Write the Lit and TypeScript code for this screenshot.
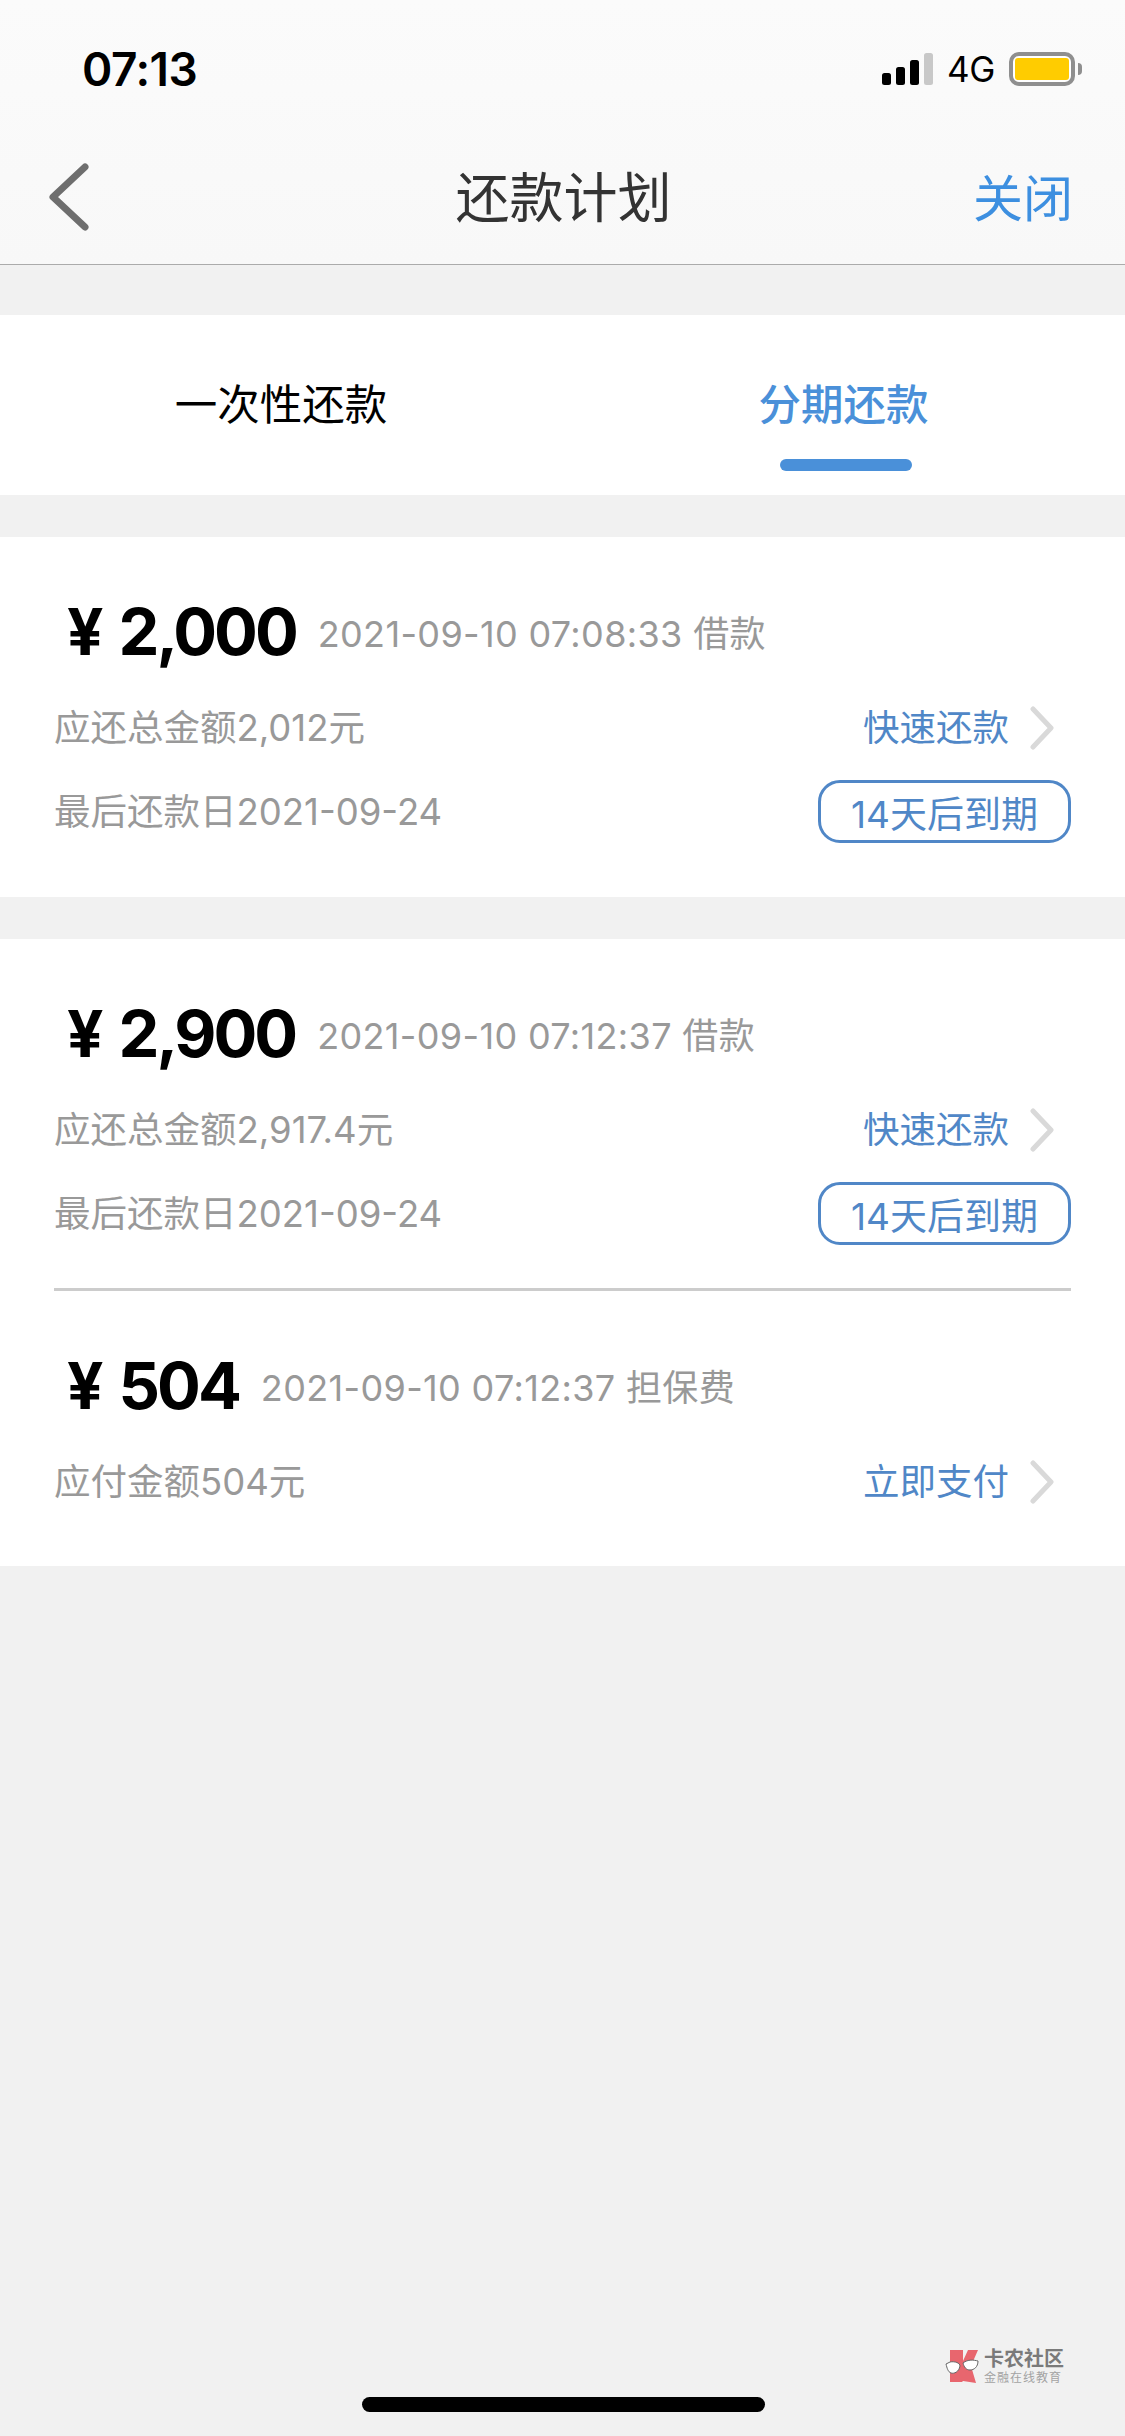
import { LitElement, html, css, nothing } from 'lit';
import { customElement, state } from 'lit/decorators.js';

interface Entry {
  amount: string;
  time: string;
  kind: string;
  owed: string;
  action: string;
  due?: string;
}

// one card can hold several entries, split by a rule
const cards: Entry[][] = [
  [
    {
      amount: '2,000',
      time: '2021-09-10 07:08:33',
      kind: '借款',
      owed: '应还总金额2,012元',
      action: '快速还款',
      due: '2021-09-24',
    },
  ],
  [
    {
      amount: '2,900',
      time: '2021-09-10 07:12:37',
      kind: '借款',
      owed: '应还总金额2,917.4元',
      action: '快速还款',
      due: '2021-09-24',
    },
    {
      amount: '504',
      time: '2021-09-10 07:12:37',
      kind: '担保费',
      owed: '应付金额504元',
      action: '立即支付',
    },
  ],
];

@customElement('app-root')
export class AppRoot extends LitElement {
  @state()
  activeTab = 1;

  static styles = css`
    :host {
      display: block;
      position: relative;
      height: 2436px;
      overflow: hidden;
      background: #f1f1f1;
      font-family: Inter, 'Noto Sans CJK SC', sans-serif;
      color: #000;
    }

    .top {
      background: linear-gradient(#fbfbfb, #f8f8f8);
      border-bottom: 1px solid #ababab;
    }

    .status {
      height: 138px;
      box-sizing: border-box;
      padding: 0 43px 0 82px;
      display: flex;
      align-items: center;
      justify-content: space-between;
    }

    .clock {
      font-size: 46px;
      font-weight: 600;
      letter-spacing: -0.5px;
    }

    .status-right {
      display: flex;
      align-items: center;
    }

    .bars {
      display: flex;
      align-items: flex-end;
      gap: 5.5px;
      height: 32px;
    }

    .bars span {
      width: 8.5px;
      background: #000;
      border-radius: 2.5px;
    }

    .bars .off {
      background: #c8c8c8;
    }

    .network {
      font-size: 35px;
      margin: 0 14px 0 14px;
      letter-spacing: -0.3px;
    }

    .battery {
      width: 66px;
      height: 34px;
      box-sizing: border-box;
      border: 4px solid #8f8f8f;
      border-radius: 10px;
      padding: 2px;
      background: #fff;
    }

    .battery i {
      display: block;
      height: 100%;
      background: #ffcc00;
      border-radius: 3px;
    }

    .nub {
      width: 4px;
      height: 12px;
      margin-left: 3px;
      background: #8f8f8f;
      border-radius: 0 4px 4px 0;
    }

    .nav {
      height: 126px;
      box-sizing: border-box;
      padding: 0 52px 8px 44px;
      display: grid;
      grid-template-columns: 1fr auto 1fr;
      align-items: center;
    }

    .back {
      display: block;
      width: 48px;
      height: 72px;
    }

    .title {
      font-size: 54px;
      line-height: 70px;
      padding-top: 3px;
      margin-left: 10px;
      color: #333;
    }

    .close {
      justify-self: end;
      font-size: 50px;
      line-height: 70px;
      padding-top: 3px;
      color: #3d8fe0;
    }

    .tabs {
      margin-top: 50px;
      height: 180px;
      background: #fff;
      display: grid;
      grid-template-columns: 562px 1fr;
    }

    .tab {
      position: relative;
      display: flex;
      justify-content: center;
      padding-top: 60px;
      font-size: 42.5px;
      line-height: 60px;
    }

    .tab.on {
      color: #4a90d9;
      font-weight: 500;
    }

    .tab.on::after {
      content: '';
      position: absolute;
      top: 144px;
      left: 218px;
      width: 132px;
      height: 12px;
      border-radius: 6px;
      background: #4a90d9;
    }

    .card {
      margin-top: 42px;
      background: #fff;
      padding: 0 54px 54px;
      display: flex;
      flex-direction: column;
    }

    .entry {
      padding-top: 59px;
    }

    .rule {
      margin-top: 43px;
      height: 3px;
      background: #cccccc;
    }

    .head {
      height: 70px;
      display: flex;
      align-items: center;
      padding-left: 13px;
    }

    .yen {
      font-size: 64px;
      font-weight: 700;
      margin-right: 15px;
    }

    .amount {
      font-size: 65px;
      font-weight: 700;
      letter-spacing: -3px;
    }

    .time {
      margin-left: 22px;
      font-size: 36px;
      letter-spacing: 0.35px;
      color: #999;
      white-space: pre;
    }

    .line {
      margin-top: 32px;
      height: 60px;
      display: flex;
      align-items: center;
      justify-content: space-between;
      font-size: 36.5px;
      color: #999;
    }

    .line.last {
      margin-top: 22px;
      height: 63px;
    }

    .text {
      padding-bottom: 6px;
    }

    .last .text {
      padding-bottom: 4px;
    }

    .link {
      display: flex;
      align-items: center;
      color: #5087c7;
      font-size: 36.5px;
    }

    .chevron {
      display: block;
      width: 24px;
      height: 44px;
      margin: 0 17px 0 21px;
    }

    .badge {
      width: 253px;
      height: 63px;
      box-sizing: border-box;
      border: 3px solid #5087c7;
      border-radius: 22px;
      display: flex;
      align-items: center;
      justify-content: center;
      color: #5087c7;
      font-size: 37px;
    }

    .watermark {
      position: absolute;
      left: 945px;
      top: 2348px;
      display: flex;
      align-items: center;
      gap: 3px;
    }

    .mark {
      display: block;
      width: 36px;
      height: 37px;
    }

    .brand {
      display: flex;
      flex-direction: column;
      color: #7a7a7a;
    }

    .brand b {
      font-size: 20px;
      line-height: 23px;
      font-weight: 700;
    }

    .brand small {
      font-size: 12px;
      line-height: 14px;
      letter-spacing: 1px;
      color: #a3a3a3;
      white-space: nowrap;
    }

    .home {
      position: absolute;
      left: 362px;
      top: 2397px;
      width: 403px;
      height: 15px;
      border-radius: 8px;
      background: #000;
    }
  `;

  renderEntry(e: Entry, i: number) {
    return html`
      ${i > 0 ? html`<div class="rule"></div>` : nothing}
      <div class="entry">
        <div class="head">
          <span class="yen">¥</span>
          <span class="amount">${e.amount}</span>
          <span class="time">${e.time} ${e.kind}</span>
        </div>
        <div class="line">
          <span class="text">${e.owed}</span>
          <span class="link">
            <span class="text">${e.action}</span>
            <svg class="chevron" viewBox="0 0 24 44" fill="none" stroke="#d9d9d9" stroke-width="5" stroke-linecap="round" stroke-linejoin="round">
              <path d="M3 3 L21 22 L3 41" />
            </svg>
          </span>
        </div>
        ${e.due
          ? html`<div class="line last">
              <span class="text">最后还款日${e.due}</span>
              <span class="badge">14天后到期</span>
            </div>`
          : nothing}
      </div>
    `;
  }

  render() {
    return html`
      <div class="top">
        <div class="status">
          <span class="clock">07:13</span>
          <div class="status-right">
            <div class="bars">
              <span style="height:12px"></span>
              <span style="height:18px"></span>
              <span style="height:25px"></span>
              <span class="off" style="height:32px"></span>
            </div>
            <span class="network">4G</span>
            <div class="battery"><i></i></div>
            <div class="nub"></div>
          </div>
        </div>
        <div class="nav">
          <svg class="back" viewBox="0 0 48 72" fill="none" stroke="#6e6e6e" stroke-width="7" stroke-linecap="round" stroke-linejoin="round">
            <path d="M41 6 L9 36 L41 66" />
          </svg>
          <span class="title">还款计划</span>
          <span class="close">关闭</span>
        </div>
      </div>

      <div class="tabs">
        ${['一次性还款', '分期还款'].map(
          (t, i) => html`<div class="tab ${i === this.activeTab ? 'on' : ''}">${t}</div>`
        )}
      </div>

      ${cards.map(
        (entries) => html`<div class="card">${entries.map((e, i) => this.renderEntry(e, i))}</div>`
      )}

      <div class="watermark">
        <svg class="mark" viewBox="0 0 36 37">
          <path d="M5 2 H18 V13 L23 2 H33 L26 18 L31 35 L18 33 L17 34 H5 Z" fill="#e8666e" />
          <path d="M1 16 L5 14 C10 13 15 15 15 18 C14 24 9 26 6 25 C3 24 2 20 1 16 Z" fill="#fff" stroke="#666" stroke-width="1" />
          <path d="M18 15 C23 11 29 12 33 13 C33 19 29 22 25 22 C21 22 19 19 18 15 Z" fill="#fff" stroke="#666" stroke-width="1" />
        </svg>
        <div class="brand">
          <b>卡农社区</b>
          <small>金融在线教育</small>
        </div>
      </div>
      <div class="home"></div>
    `;
  }
}
